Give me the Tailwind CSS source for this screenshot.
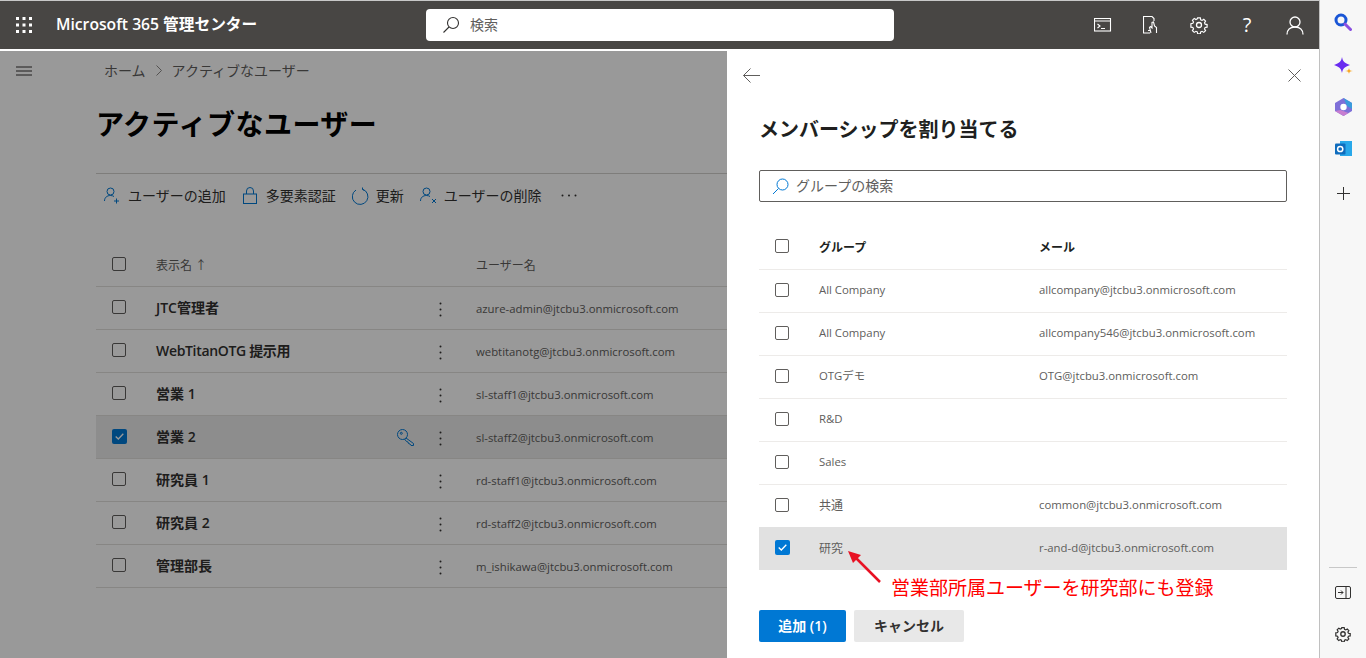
<!DOCTYPE html>
<html lang="ja">
<head>
    <meta charset="UTF-8">
    <title>アクティブなユーザー - Microsoft 365 管理センター</title>
    <script src="https://cdn.jsdelivr.net/npm/@tailwindcss/browser@4"></script>
</head>
<body class="overflow-hidden bg-white font-['Open_Sans','Noto_Sans_CJK_JP',sans-serif] text-[#323130]">
<div class="flex h-[658px] w-[1366px]">
    <div class="relative w-[1319px] h-full">
        <!-- ヘッダー -->
        <header class="h-[51px] border-t border-t-[#c8c8c8] border-b-2 border-b-white bg-[#484644] flex items-center text-white">
            <svg class="ml-[16px] w-4 h-4" viewBox="0 0 16 16" fill="#fff"><rect x="0" y="0" width="3" height="3"/><rect x="6.500" y="0" width="3" height="3"/><rect x="13" y="0" width="3" height="3"/><rect x="0" y="6.500" width="3" height="3"/><rect x="6.500" y="6.500" width="3" height="3"/><rect x="13" y="6.500" width="3" height="3"/><rect x="0" y="13" width="3" height="3"/><rect x="6.500" y="13" width="3" height="3"/><rect x="13" y="13" width="3" height="3"/></svg>
            <div class="ml-[24px] w-[370px] text-[15.7px] font-semibold whitespace-nowrap">Microsoft 365 管理センター</div>
            <div class="w-[468px] h-[32px] bg-white rounded-[4px] flex items-center pl-[16px] text-[14px] text-[#605e5c]">
                <svg class="w-[18px] h-[18px]" viewBox="0 0 18 18" fill="none" stroke="#323130" stroke-width="1.100"><circle cx="11" cy="7" r="5.500"/><path d="M7 11 1.500 16.500"/></svg>
                <span class="ml-[10px] mb-[2px]">検索</span>
            </div>
            <div class="ml-[197px] w-[24px] flex justify-center">
                <svg class="w-[18px] h-[14px]" viewBox="0 0 18 14" fill="none" stroke="#fff" stroke-width="1.100"><rect x=".5" y=".5" width="16" height="12.500"/><path d="M.5 3h16M3.500 6 6 8 3.500 10M7 10.500h4"/></svg>
            </div>
            <div class="ml-[24px] w-[24px] flex justify-center">
                <svg class="w-[16px] h-[18px]" viewBox="0 0 16 18" fill="none" stroke="#fff" stroke-width="1.100"><path d="M7 17H.5V.5h8.500l2 2V5M5 14.500h2M8 17l-1.500-5.500 1-1 1.500 1.500V6.500l1.500-.5 1 4 2 1.500V17"/></svg>
            </div>
            <div class="ml-[24px] w-[24px] flex justify-center">
                <svg class="w-[18px] h-[18px]" viewBox="0 0 18 18" fill="none" stroke="#fff" stroke-width="1.300"><circle cx="9" cy="9" r="2.500"/><path d="M7.500 1h3l.4 2.200 1.500.7 1.900-1.200 2 2-1.200 1.900.7 1.500 2.200.4v2.900l-2.200.4-.7 1.500 1.200 1.900-2 2-1.900-1.200-1.500.7-.4 2.200h-3l-.4-2.200-1.500-.7-1.900 1.200-2-2 1.200-1.900-.7-1.500-2.200-.4V7.500l2.200-.4.700-1.500-1.200-1.900 2-2 1.900 1.200 1.500-.7z" transform="translate(.9 .9) scale(.9)"/></svg>
            </div>
            <div class="ml-[24px] w-[24px] text-center text-[20px] leading-none">?</div>
            <div class="ml-[24px] w-[24px] flex justify-center">
                <svg class="w-[18px] h-[19px]" viewBox="0 0 18 19" fill="none" stroke="#fff" stroke-width="1.300"><circle cx="9" cy="6" r="5"/><path d="M1 18.500c0-4.500 3-7.500 8-7.500s8 3 8 7.500"/></svg>
            </div>
        </header>

        <div class="flex">
            <!-- 左ナビ -->
            <nav class="w-[96px] shrink-0 pt-[14px] pl-[16px]">
                <svg class="w-4 h-3" viewBox="0 0 16 12" stroke="#323130" stroke-width="1"><path d="M0 2h16M0 6h16M0 10h16"/></svg>
            </nav>

            <!-- ユーザー一覧 -->
            <main class="flex-1">
                <div class="h-[39px] pl-[8px] flex items-center text-[14px] text-[#605e5c]">
                    <span>ホーム</span>
                    <svg class="mx-[9px] w-[8px] h-[11px]" viewBox="0 0 8 11" fill="none" stroke="#8a8886"><path d="M1.500.5 6.500 5.500 1.500 10.500"/></svg>
                    <span>アクティブなユーザー</span>
                </div>
                <h1 class="h-[67px] flex items-center text-[28px] tracking-[0.5px] font-bold text-black">アクティブなユーザー</h1>
                <div class="mt-[16px] h-[44px] border-t border-[#d2d0ce] flex items-center text-[14px] text-[#323130]">
                    <svg class="ml-[8px] w-[16px] h-[17px]" viewBox="0 0 16 17" fill="none" stroke="#0078d4"><circle cx="6.500" cy="4.500" r="3.500"/><path d="M.5 14c0-3.500 2.500-5.500 6-5.500 1.500 0 2.500.4 3.500 1M12.500 11.500v5M10 14h5"/></svg>
                    <span class="ml-[8px]">ユーザーの追加</span>
                    <svg class="ml-[17px] w-[14px] h-[17px]" viewBox="0 0 14 17" fill="none" stroke="#0078d4"><rect x=".5" y="7" width="13" height="9.500"/><path d="M3.500 7V4a3.500 3.500 0 0 1 7 0v3"/></svg>
                    <span class="ml-[9px]">多要素認証</span>
                    <svg class="ml-[16px] w-[17px] h-[18px]" viewBox="0 0 17 18" fill="none" stroke="#0078d4"><path d="M10.500 2.200A7.800 7.800 0 1 1 4 3M10.500.5 10.500 2.500 12.500 3.500"/></svg>
                    <span class="ml-[7px]">更新</span>
                    <svg class="ml-[16px] w-[17px] h-[17px]" viewBox="0 0 17 17" fill="none" stroke="#0078d4"><circle cx="6.500" cy="4.500" r="3.500"/><path d="M.5 14c0-3.500 2.500-5.500 6-5.500 1.500 0 2.500.4 3.500 1M12 12l4 4M16 12l-4 4"/></svg>
                    <span class="ml-[7px]">ユーザーの削除</span>
                    <svg class="ml-[20px] w-[16px] h-[3px]" viewBox="0 0 16 3" fill="#323130"><circle cx="1.500" cy="1.500" r="1"/><circle cx="8" cy="1.500" r="1"/><circle cx="14.500" cy="1.500" r="1"/></svg>
                </div>

                <div class="mt-[27px] text-[11.35px]">
                    <div class="h-[43px] flex items-center border-b border-[#e1dfdd] text-[12px] text-[#605e5c]">
                        <span class="ml-[16px] mb-[2px] w-[14px] h-[14px] rounded-[2px] border border-[#605e5c]"></span>
                        <span class="ml-[30px] mt-[2px] w-[320px]">表示名 ↑</span>
                        <span class="mt-[2px]">ユーザー名</span>
                    </div>
                    <div class="h-[43px] flex items-center border-b border-[#e1dfdd]">
                        <span class="ml-[16px] mb-[2px] w-[14px] h-[14px] rounded-[2px] border border-[#605e5c]"></span>
                        <span class="ml-[30px] mb-[2px] w-[264px] text-[14px] font-semibold">JTC管理者</span>
                        <svg class="mx-[18.5px] mt-[2px] w-[3px] h-[15px]" viewBox="0 0 3 15" fill="#323130"><circle cx="1.500" cy="1.500" r="1"/><circle cx="1.500" cy="7.500" r="1"/><circle cx="1.500" cy="13.500" r="1"/></svg>
                        <span class="ml-[16px] mt-[2px] text-[#605e5c] whitespace-nowrap">azure-admin@jtcbu3.onmicrosoft.com</span>
                    </div>
                    <div class="h-[43px] flex items-center border-b border-[#e1dfdd]">
                        <span class="ml-[16px] mb-[2px] w-[14px] h-[14px] rounded-[2px] border border-[#605e5c]"></span>
                        <span class="ml-[30px] mb-[2px] w-[264px] text-[14px] tracking-[-0.33px] font-semibold">WebTitanOTG 提示用</span>
                        <svg class="mx-[18.5px] mt-[2px] w-[3px] h-[15px]" viewBox="0 0 3 15" fill="#323130"><circle cx="1.500" cy="1.500" r="1"/><circle cx="1.500" cy="7.500" r="1"/><circle cx="1.500" cy="13.500" r="1"/></svg>
                        <span class="ml-[16px] mt-[2px] text-[#605e5c] whitespace-nowrap">webtitanotg@jtcbu3.onmicrosoft.com</span>
                    </div>
                    <div class="h-[43px] flex items-center border-b border-[#e1dfdd]">
                        <span class="ml-[16px] mb-[2px] w-[14px] h-[14px] rounded-[2px] border border-[#605e5c]"></span>
                        <span class="ml-[30px] mb-[2px] w-[264px] text-[14px] font-semibold">営業 1</span>
                        <svg class="mx-[18.5px] mt-[2px] w-[3px] h-[15px]" viewBox="0 0 3 15" fill="#323130"><circle cx="1.500" cy="1.500" r="1"/><circle cx="1.500" cy="7.500" r="1"/><circle cx="1.500" cy="13.500" r="1"/></svg>
                        <span class="ml-[16px] mt-[2px] text-[#605e5c] whitespace-nowrap">sl-staff1@jtcbu3.onmicrosoft.com</span>
                    </div>
                    <div class="h-[43px] flex items-center border-b border-[#e1dfdd] bg-[#ebebeb]">
                        <span class="ml-[16px] mb-[2px] w-[15px] h-[15px] rounded-[2px] bg-[#0078d4] flex items-center justify-center">
                            <svg class="w-[9px] h-[7px]" viewBox="0 0 9 7" fill="none" stroke="#fff" stroke-width="1.300"><path d="M.7 3.500 3.300 6 8.300.8"/></svg>
                        </span>
                        <span class="ml-[29px] mb-[2px] w-[234px] text-[14px] font-semibold">営業 2</span>
                        <span class="w-[30px] flex justify-center">
                            <svg class="w-[17px] h-[17px]" viewBox="0 0 17 17" fill="none" stroke="#0078d4"><circle cx="5.500" cy="5.500" r="5"/><circle cx="4.300" cy="4.300" r="1"/><path d="M9 9l7.500 5.500v2h-2.500l-1-1.500-1.500-.5-.5-1.500-1.500-.5-2-2.500"/></svg>
                        </span>
                        <svg class="mx-[18.5px] mt-[2px] w-[3px] h-[15px]" viewBox="0 0 3 15" fill="#323130"><circle cx="1.500" cy="1.500" r="1"/><circle cx="1.500" cy="7.500" r="1"/><circle cx="1.500" cy="13.500" r="1"/></svg>
                        <span class="ml-[16px] mt-[2px] text-[#605e5c] whitespace-nowrap">sl-staff2@jtcbu3.onmicrosoft.com</span>
                    </div>
                    <div class="h-[43px] flex items-center border-b border-[#e1dfdd]">
                        <span class="ml-[16px] mb-[2px] w-[14px] h-[14px] rounded-[2px] border border-[#605e5c]"></span>
                        <span class="ml-[30px] mb-[2px] w-[264px] text-[14px] font-semibold">研究員 1</span>
                        <svg class="mx-[18.5px] mt-[2px] w-[3px] h-[15px]" viewBox="0 0 3 15" fill="#323130"><circle cx="1.500" cy="1.500" r="1"/><circle cx="1.500" cy="7.500" r="1"/><circle cx="1.500" cy="13.500" r="1"/></svg>
                        <span class="ml-[16px] mt-[2px] text-[#605e5c] whitespace-nowrap">rd-staff1@jtcbu3.onmicrosoft.com</span>
                    </div>
                    <div class="h-[43px] flex items-center border-b border-[#e1dfdd]">
                        <span class="ml-[16px] mb-[2px] w-[14px] h-[14px] rounded-[2px] border border-[#605e5c]"></span>
                        <span class="ml-[30px] mb-[2px] w-[264px] text-[14px] font-semibold">研究員 2</span>
                        <svg class="mx-[18.5px] mt-[2px] w-[3px] h-[15px]" viewBox="0 0 3 15" fill="#323130"><circle cx="1.500" cy="1.500" r="1"/><circle cx="1.500" cy="7.500" r="1"/><circle cx="1.500" cy="13.500" r="1"/></svg>
                        <span class="ml-[16px] mt-[2px] text-[#605e5c] whitespace-nowrap">rd-staff2@jtcbu3.onmicrosoft.com</span>
                    </div>
                    <div class="h-[43px] flex items-center border-b border-[#e1dfdd]">
                        <span class="ml-[16px] mb-[2px] w-[14px] h-[14px] rounded-[2px] border border-[#605e5c]"></span>
                        <span class="ml-[30px] mb-[2px] w-[264px] text-[14px] font-semibold">管理部長</span>
                        <svg class="mx-[18.5px] mt-[2px] w-[3px] h-[15px]" viewBox="0 0 3 15" fill="#323130"><circle cx="1.500" cy="1.500" r="1"/><circle cx="1.500" cy="7.500" r="1"/><circle cx="1.500" cy="13.500" r="1"/></svg>
                        <span class="ml-[16px] mt-[2px] text-[#605e5c] whitespace-nowrap">m_ishikawa@jtcbu3.onmicrosoft.com</span>
                    </div>
                </div>
            </main>
        </div>

        <!-- オーバーレイ -->
        <div class="absolute left-0 right-0 top-[51px] bottom-0 bg-black/40"></div>

        <!-- メンバーシップパネル -->
        <aside class="absolute right-0 top-[51px] bottom-0 w-[592px] bg-white px-[32px]">
            <div class="h-[48px] flex items-center justify-between -mx-[16px]">
                <svg class="w-[17px] h-[15px]" viewBox="0 0 17 15" fill="none" stroke="#605e5c"><path d="M7.500.5.500 7.500 7.500 14.500M.5 7.500H17"/></svg>
                <svg class="w-[13px] h-[13px] mr-[2px]" viewBox="0 0 13 13" fill="none" stroke="#605e5c"><path d="M.5.500l12 12M12.500.500l-12 12"/></svg>
            </div>
            <h2 class="h-[62px] flex items-center text-[20px] font-bold text-[#201f1e]">メンバーシップを割り当てる</h2>
            <div class="mt-[9px] h-[32px] border border-[#605e5c] rounded-[2px] flex items-center pl-[12px] text-[14px] text-[#605e5c]">
                <svg class="w-[17px] h-[17px]" viewBox="0 0 17 17" fill="none" stroke="#0078d4"><circle cx="10.500" cy="6.500" r="5.500"/><path d="M6.500 10.500 1 16"/></svg>
                <span class="ml-[7px] mb-[2px]">グループの検索</span>
            </div>

            <div class="mt-[24px] text-[11.37px] text-[#605e5c]">
                <div class="h-[43px] flex items-center text-[12px] text-[#201f1e] font-semibold">
                    <span class="ml-[16px] mb-[3px] w-[14px] h-[14px] rounded-[2px] border border-[#605e5c]"></span>
                    <span class="ml-[30px] w-[220px]">グループ</span>
                    <span>メール</span>
                </div>
                <div class="h-[43px] pb-[2px] flex items-center border-t border-[#edebe9]">
                    <span class="ml-[16px] w-[14px] h-[14px] rounded-[2px] border border-[#605e5c]"></span>
                    <span class="ml-[30px] w-[220px]">All Company</span>
                    <span class="whitespace-nowrap">allcompany@jtcbu3.onmicrosoft.com</span>
                </div>
                <div class="h-[43px] pb-[2px] flex items-center border-t border-[#edebe9]">
                    <span class="ml-[16px] w-[14px] h-[14px] rounded-[2px] border border-[#605e5c]"></span>
                    <span class="ml-[30px] w-[220px]">All Company</span>
                    <span class="whitespace-nowrap">allcompany546@jtcbu3.onmicrosoft.com</span>
                </div>
                <div class="h-[43px] pb-[2px] flex items-center border-t border-[#edebe9]">
                    <span class="ml-[16px] w-[14px] h-[14px] rounded-[2px] border border-[#605e5c]"></span>
                    <span class="ml-[30px] w-[220px]">OTGデモ</span>
                    <span class="whitespace-nowrap">OTG@jtcbu3.onmicrosoft.com</span>
                </div>
                <div class="h-[43px] pb-[2px] flex items-center border-t border-[#edebe9]">
                    <span class="ml-[16px] w-[14px] h-[14px] rounded-[2px] border border-[#605e5c]"></span>
                    <span class="ml-[30px] w-[220px]">R&amp;D</span>
                </div>
                <div class="h-[43px] pb-[2px] flex items-center border-t border-[#edebe9]">
                    <span class="ml-[16px] w-[14px] h-[14px] rounded-[2px] border border-[#605e5c]"></span>
                    <span class="ml-[30px] w-[220px]">Sales</span>
                </div>
                <div class="h-[43px] pb-[2px] flex items-center border-t border-[#edebe9]">
                    <span class="ml-[16px] w-[14px] h-[14px] rounded-[2px] border border-[#605e5c]"></span>
                    <span class="ml-[30px] mt-[2px] w-[220px] text-[12px]">共通</span>
                    <span class="whitespace-nowrap">common@jtcbu3.onmicrosoft.com</span>
                </div>
                <div class="h-[43px] pb-[2px] flex items-center bg-[#e1e1e1]">
                    <span class="ml-[16px] w-[15px] h-[15px] rounded-[2px] bg-[#0078d4] flex items-center justify-center">
                        <svg class="w-[9px] h-[7px]" viewBox="0 0 9 7" fill="none" stroke="#fff" stroke-width="1.300"><path d="M.7 3.500 3.300 6 8.300.8"/></svg>
                    </span>
                    <span class="ml-[29px] mt-[2px] w-[220px] text-[12px]">研究</span>
                    <span class="whitespace-nowrap">r-and-d@jtcbu3.onmicrosoft.com</span>
                </div>
            </div>

            <div class="mt-[40px] flex gap-[8px] text-[14px] font-semibold">
                <button class="w-[87px] h-[32px] pb-[2px] bg-[#0078d4] text-white rounded-[2px]">追加 (1)</button>
                <button class="w-[110px] h-[32px] pb-[2px] bg-[#e8e8e8] text-[#323130] rounded-[2px]">キャンセル</button>
            </div>

            <!-- 注釈 -->
            <svg class="absolute left-[118px] top-[495px] w-[40px] h-[40px]" viewBox="0 0 40 40" fill="none"><path d="M35 36 9 10" stroke="#e81123" stroke-width="2.500"/><path d="M3 5 16 9 8 17z" fill="#e81123"/></svg>
            <div class="absolute left-[164px] top-[524px] text-[19px] leading-[26px] text-[#ff0000] whitespace-nowrap">営業部所属ユーザーを研究部にも登録</div>
        </aside>
    </div>

    <!-- Edge サイドバー -->
    <div class="w-[47px] h-full bg-[#f7f7f7] border-l border-[#c0c0c0] flex flex-col items-center">
        <svg class="mt-[13px] w-[18px] h-[18px]" viewBox="0 0 18 18" fill="none"><circle cx="7" cy="7" r="5" stroke="#1a56d6" stroke-width="3"/><path d="M11 11l5.500 5.500" stroke="#8a4fe0" stroke-width="3" stroke-linecap="round"/></svg>
        <svg class="mt-[26px] w-[19px] h-[19px]" viewBox="0 0 19 19"><path d="M8 0c.8 4.500 2.500 6.200 8 8-5.500 1.800-7.200 3.500-8 8-.8-4.500-2.500-6.200-8-8 5.500-1.800 7.200-3.500 8-8z" fill="#6a2cf0"/><path d="M15 11c.3 2 1 2.700 4 3-3 .3-3.700 1-4 3-.3-2-1-2.700-4-3 3-.3 3.700-1 4-3z" fill="#f9a825"/></svg>
        <svg class="mt-[22px] w-[17px] h-[18px]" viewBox="0 0 17 18"><path d="M8.500 0 17 5v8l-8.500 5L0 13V5z" fill="#7e6fd8"/><path d="M8.500 0 17 5v6l-5-3z" fill="#3a9bdc"/><path d="M0 13l8.500 5 5-3-8-3z" fill="#c77ed0"/><circle cx="8.500" cy="9" r="3.200" fill="#fff"/></svg>
        <svg class="mt-[24px] w-[17px] h-[17px]" viewBox="0 0 17 17"><rect x="5" y="1" width="12" height="15" fill="#28a8ea"/><rect x="0" y="3.500" width="10.500" height="11" rx="1" fill="#0f6cbd"/><circle cx="5.200" cy="9" r="2.600" fill="none" stroke="#fff" stroke-width="1.500"/></svg>
        <svg class="mt-[30px] w-[13px] h-[13px]" viewBox="0 0 13 13" stroke="#323130"><path d="M6.500 0v13M0 6.500h13"/></svg>
        <div class="mt-auto w-[28px] border-t border-[#c8c8c8]"></div>
        <svg class="mt-[18px] w-[16px] h-[13px]" viewBox="0 0 16 13" fill="none" stroke="#323130"><rect x=".5" y=".5" width="15" height="12" rx="1.500"/><path d="M11 .5v12M3 6.500h5M6 4.500l2 2-2 2"/></svg>
        <svg class="mt-[27px] mb-[16px] w-[16px] h-[16px]" viewBox="0 0 18 18" fill="none" stroke="#323130" stroke-width="1.500"><circle cx="9" cy="9" r="2.500"/><path d="M7.500 1h3l.4 2.200 1.500.7 1.900-1.200 2 2-1.200 1.900.7 1.500 2.200.4v2.900l-2.200.4-.7 1.500 1.200 1.900-2 2-1.900-1.200-1.500.7-.4 2.200h-3l-.4-2.200-1.500-.7-1.900 1.200-2-2 1.200-1.900-.7-1.500-2.200-.4V7.500l2.200-.4.700-1.500-1.200-1.900 2-2 1.900 1.200 1.500-.7z" transform="translate(.9 .9) scale(.9)"/></svg>
    </div>
</div>
</body>
</html>
